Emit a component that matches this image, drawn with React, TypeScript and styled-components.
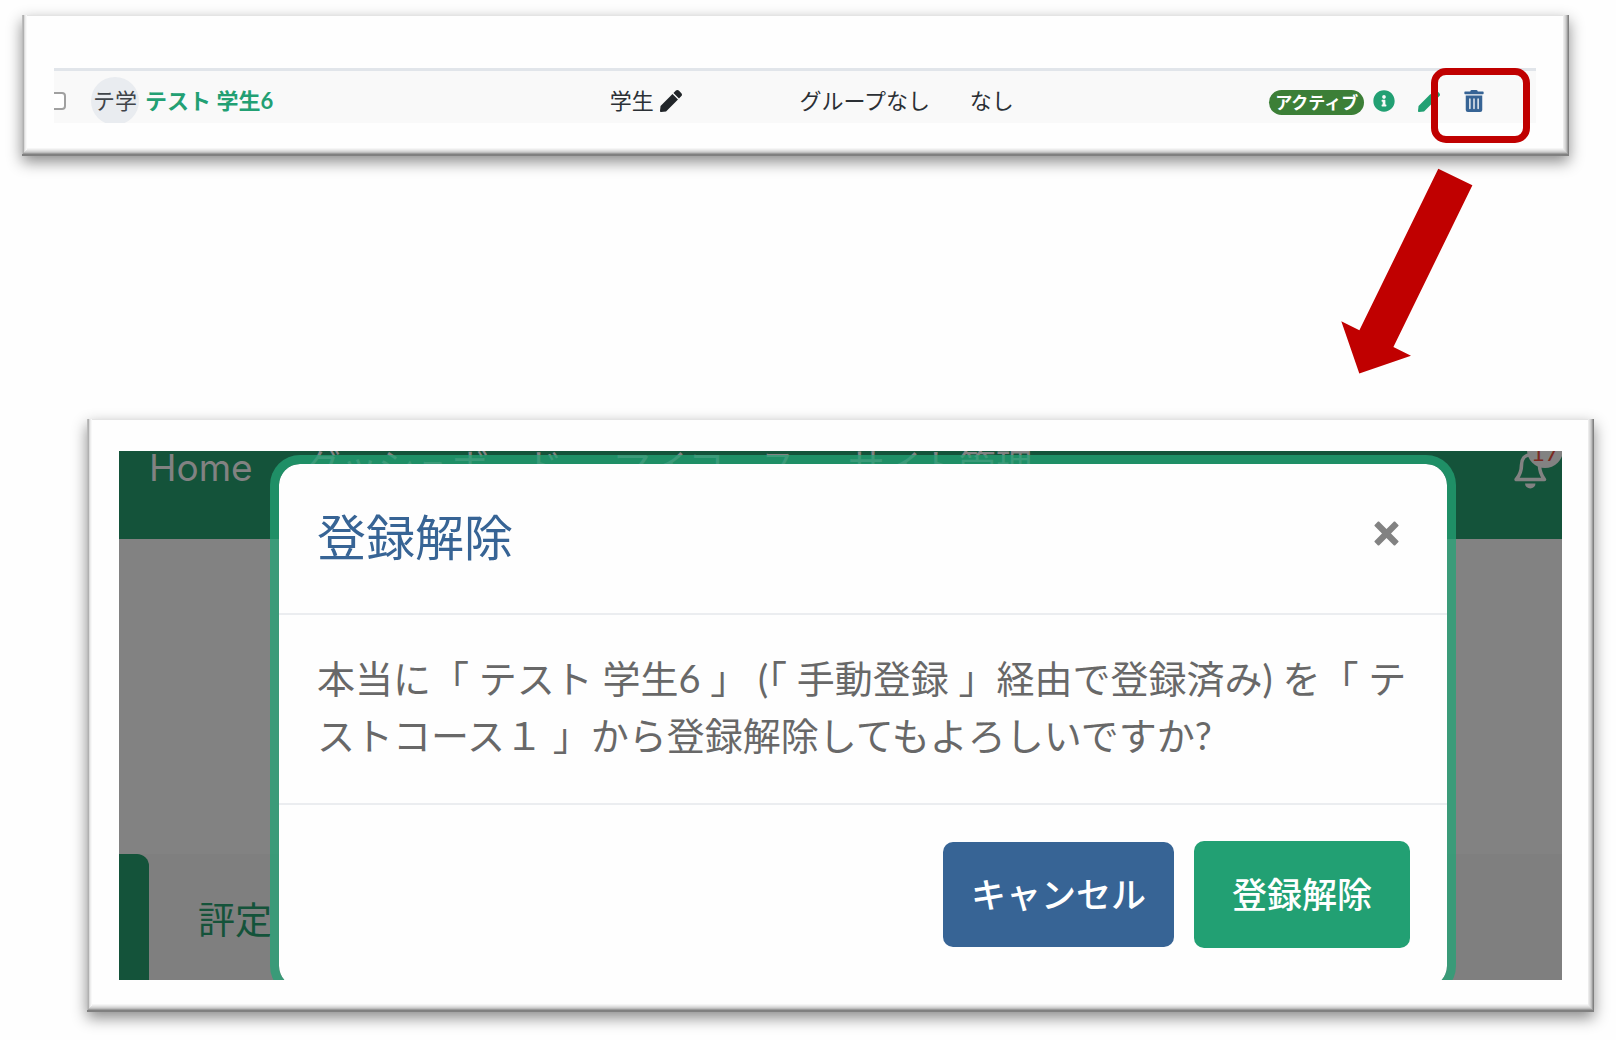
import React from "react";
import styled, { createGlobalStyle } from "styled-components";
import { FaInfoCircle, FaPen, FaTrashAlt } from "react-icons/fa";

const GlobalStyle = createGlobalStyle`
  *, *::before, *::after { box-sizing: border-box; }
  body {
    margin: 0;
    background: #fefefe;
    font-family: Lato, "Noto Sans CJK JP", sans-serif;
    color: #2b3035;
  }
  button { font-family: inherit; cursor: pointer; }
`;

const Page = styled.main`
  display: flex;
  flex-direction: column;
  min-height: 100vh;
  padding: 15px 22px 28px;
`;

const Card = styled.section<{ $indent?: number; $outdent?: number }>`
  position: relative;
  margin-left: ${(p) => p.$indent ?? 0}px;
  margin-right: ${(p) => p.$outdent ?? 0}px;
  background: #fefefe;
  box-shadow:
    inset -1px -2px #808080,
    inset 1px 0 #bcbcbc,
    inset -2px -3px #9c9c9c,
    inset 2px 0 #b0b0b0,
    inset -3px -4px #bdbdbd,
    inset 3px 0 #dcdcdc,
    inset -4px -5px #d2d2d2,
    inset 4px 0 #eeeeee,
    inset -5px -6px #e0e0e0,
    inset 5px 0 #f8f8f8,
    inset -6px -7px #ececec,
    inset 0 -8px #f6f6f6,
    inset 0 1px #e4e4e4,
    0 6px 14px rgba(0, 0, 0, 0.45);
`;

const ListCard = styled(Card)`
  padding: 53px 33px 33px 32px;
`;

const SceneCard = styled(Card)`
  padding: 32px;
`;

const RowClip = styled.div`
  height: 55px;
  overflow: hidden;
  background: #f9f9f9;
  border-top: 3px solid #e1e5ea;
`;

const UserTable = styled.table`
  width: 100%;
  table-layout: fixed;
  border-collapse: collapse;
  font-size: 22px;
  line-height: 32px;
`;

const Cell = styled.td<{ $width: string }>`
  width: ${(p) => p.$width};
  height: 60px;
  padding: 0;
  vertical-align: middle;
  white-space: nowrap;
`;

const Inline = styled.div<{ $gap: number }>`
  display: flex;
  align-items: center;
  gap: ${(p) => p.$gap}px;
`;

const Check = styled.input`
  display: block;
  appearance: none;
  width: 18px;
  height: 18px;
  margin: 0 0 0 -6px;
  border: 2px solid #a0a0a0;
  border-radius: 4px;
  background: #fff;
`;

const Avatar = styled.span`
  display: flex;
  align-items: center;
  justify-content: center;
  width: 48px;
  height: 48px;
  border-radius: 50%;
  background: #e9ecf0;
  color: #3f4449;
`;

const UserLink = styled.a`
  color: #22a073;
  font-weight: 700;
  text-decoration: none;
`;

const IconButton = styled.button<{ $color: string }>`
  display: flex;
  padding: 0;
  border: 0;
  background: none;
  color: ${(p) => p.$color};
  font-size: 22px;
`;

const Status = styled.span`
  margin-top: 3px;
  padding: 0 6px;
  border-radius: 13px;
  background: #3c7f37;
  color: #fff;
  font-size: 17px;
  font-weight: 700;
  line-height: 25px;
`;

const Actions = styled.div`
  display: flex;
  align-items: center;
  gap: 9px;
`;

const EditActions = styled.div`
  display: flex;
  gap: 23px;
  padding-left: 14px;
`;

const Highlight = styled.div`
  position: absolute;
  top: 53px;
  right: 39px;
  width: 99px;
  height: 75px;
  border: 7px solid #c00000;
  border-radius: 15px;
  pointer-events: none;
`;

const ArrowDrawing = styled.svg`
  display: block;
  align-self: flex-end;
  width: 132px;
  height: 206px;
  margin: 12px 121px 45px 0;
`;

const Scene = styled.div`
  position: relative;
  display: flex;
  flex-direction: column;
  height: 529px;
  overflow: hidden;
  background: #828282;
`;

const TopBar = styled.header`
  display: flex;
  flex-shrink: 0;
  justify-content: space-between;
  height: 88px;
  padding-left: 30px;
  background: #14533a;
`;

const Nav = styled.nav`
  display: flex;
  gap: 51px;
`;

const NavLink = styled.a`
  color: #828282;
  font-family: Inter, "Noto Sans CJK JP", sans-serif;
  font-size: 37px;
  line-height: 34px;
  text-decoration: none;
  white-space: nowrap;
`;

const BellButton = styled.button`
  position: relative;
  align-self: flex-start;
  width: 48px;
  height: 40px;
  padding: 0;
  border: 0;
  background: none;

  svg { display: block; }
`;

const Count = styled.span`
  position: absolute;
  top: -19px;
  left: 13px;
  width: 36px;
  height: 36px;
  border-radius: 50%;
  background: #828282;
  color: #7c2a22;
  font-size: 24px;
  line-height: 40px;
  text-align: center;
`;

const Tabs = styled.div`
  display: flex;
  height: 126px;
  margin-top: auto;
  background: #7f7f7f;
`;

const ActiveTab = styled.div`
  width: 30px;
  border-top-right-radius: 12px;
  background: #14533a;
`;

const Tab = styled.a`
  padding: 39px 49px 0;
  color: #14533a;
  font-size: 37px;
  line-height: 54px;
  text-decoration: none;
  white-space: nowrap;
`;

const Dialog = styled.div`
  position: absolute;
  top: 4px;
  left: 151px;
  right: 106px;
  border: 9px solid rgba(35, 163, 118, 0.75);
  border-radius: 30px;
  background: #fefefe;
  background-clip: padding-box;
`;

const DialogHeader = styled.div`
  display: flex;
  align-items: flex-start;
  justify-content: space-between;
  height: 151px;
  padding: 36px 48px 0 38px;
  border-bottom: 2px solid #ebedf0;
`;

const DialogTitle = styled.h2`
  margin: 0;
  color: #376495;
  font-size: 49px;
  font-weight: 400;
  line-height: 74px;
`;

const CloseButton = styled.button`
  display: flex;
  align-items: center;
  height: 67px;
  padding: 0;
  border: 0;
  background: none;
`;

const DialogBody = styled.p`
  margin: 0;
  padding: 35px 37px 39px 38px;
  border-bottom: 2px solid #ebedf0;
  color: #686868;
  font-size: 38px;
  line-height: 57px;
`;

const DialogFooter = styled.div`
  display: flex;
  align-items: center;
  justify-content: flex-end;
  gap: 20px;
  padding: 36px 37px 39px;
`;

const DialogButton = styled.button<{ $tone: string; $pad: number; $height: number }>`
  height: ${(p) => p.$height}px;
  padding: 0 ${(p) => p.$pad}px 2px;
  border: 0;
  border-radius: 10px;
  background: ${(p) => p.$tone};
  color: #fff;
  font-size: 35px;
  font-weight: 500;
  line-height: 52px;
`;

const links = ["Home", "ダッシュボード", "マイコース", "サイト管理"];

function ParticipantRow() {
  return (
    <RowClip>
      <UserTable>
        <tbody>
          <tr>
            <Cell $width="2.5%">
              <Check type="checkbox" aria-label="テスト 学生6" />
            </Cell>
            <Cell $width="35%">
              <Inline $gap={6}>
                <Avatar>テ学</Avatar>
                <UserLink href="#user">テスト 学生6</UserLink>
              </Inline>
            </Cell>
            <Cell $width="12.8%">
              <Inline $gap={6}>
                学生
                <IconButton $color="#212529" aria-label="ロール編集">
                  <FaPen />
                </IconButton>
              </Inline>
            </Cell>
            <Cell $width="11.5%">グループなし</Cell>
            <Cell $width="20.2%">なし</Cell>
            <Cell $width="18%">
              <Actions>
                <Status>アクティブ</Status>
                <IconButton $color="#22a073" aria-label="詳細">
                  <FaInfoCircle />
                </IconButton>
                <EditActions>
                  <IconButton $color="#22a073" aria-label="編集">
                    <FaPen />
                  </IconButton>
                  <IconButton $color="#376495" aria-label="登録解除">
                    <FaTrashAlt />
                  </IconButton>
                </EditActions>
              </Actions>
            </Cell>
          </tr>
        </tbody>
      </UserTable>
    </RowClip>
  );
}

function UnenrolDialog() {
  return (
    <Dialog role="dialog" aria-labelledby="dialog-title">
      <DialogHeader>
        <DialogTitle id="dialog-title">登録解除</DialogTitle>
        <CloseButton aria-label="閉じる">
          <svg width="25" height="25" viewBox="0 0 25 25">
            <path
              d="M5 0.6 12.5 8 20 0.6Q20.5 0.2 21 0.6L24.4 4Q24.8 4.5 24.4 5L17 12.5 24.4 20Q24.8 20.5 24.4 21L21 24.4Q20.5 24.8 20 24.4L12.5 17 5 24.4Q4.5 24.8 4 24.4L0.6 21Q0.2 20.5 0.6 20L8 12.5 0.6 5Q0.2 4.5 0.6 4L4 0.6Q4.5 0.2 5 0.6Z"
              fill="#828282"
            />
          </svg>
        </CloseButton>
      </DialogHeader>
      <DialogBody>
        本当に「 テスト 学生6 」 (「 手動登録 」経由で登録済み) を「 テストコース１ 」から登録解除してもよろしいですか?
      </DialogBody>
      <DialogFooter>
        <DialogButton $tone="#376495" $pad={28} $height={105}>
          キャンセル
        </DialogButton>
        <DialogButton $tone="#22a073" $pad={38} $height={107}>
          登録解除
        </DialogButton>
      </DialogFooter>
    </Dialog>
  );
}

export default function App() {
  return (
    <>
      <GlobalStyle />
      <Page>
        <ListCard $outdent={25}>
          <ParticipantRow />
          <Highlight />
        </ListCard>
        <ArrowDrawing viewBox="1341 168 132 206" aria-hidden="true">
          <polygon
            points="1438.3,168.7 1472.4,185.3 1393.4,347 1411,355.7 1359.3,373.4 1341.3,321.3 1359.4,330.3"
            fill="#c00000"
          />
        </ArrowDrawing>
        <SceneCard $indent={65}>
          <Scene>
            <TopBar>
              <Nav>
                {links.map((label) => (
                  <NavLink key={label} href="#nav">
                    {label}
                  </NavLink>
                ))}
              </Nav>
              <BellButton aria-label="通知 17">
                <svg width="34" height="38" viewBox="0 0 34 38">
                  <path
                    d="M16 3C10.5 3 7.5 7.5 7.5 13C7.5 19 6 23 2.2 27.5H30.5C27 23 25.5 19 25.5 13C25.5 7.5 22 3 16 3Z"
                    fill="none"
                    stroke="#828282"
                    strokeWidth="3.6"
                    strokeLinejoin="round"
                  />
                  <path d="M11 31.5H21.5A5.2 5 0 0 1 11 31.5Z" fill="#828282" />
                </svg>
                <Count>17</Count>
              </BellButton>
            </TopBar>
            <Tabs>
              <ActiveTab />
              <Tab href="#grades">評定</Tab>
            </Tabs>
            <UnenrolDialog />
          </Scene>
        </SceneCard>
      </Page>
    </>
  );
}
